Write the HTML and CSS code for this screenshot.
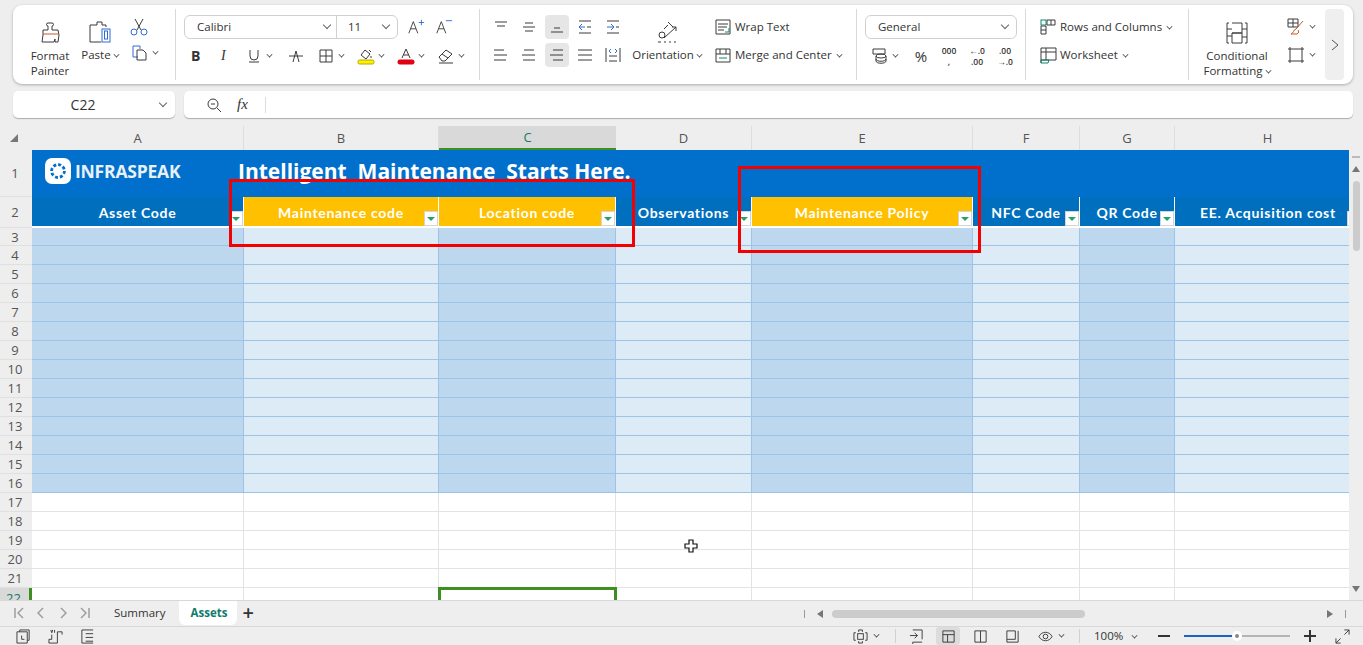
FILE: index.html
```html
<!DOCTYPE html>
<html lang="en">
<head>
<meta charset="utf-8">
<title>Assets</title>
<link rel="stylesheet" href="styles.css">
</head>
<body>
<header class="ribbon">
  <section class="grp g1">
    <div class="big fp">
      <svg class="i24" viewBox="0 0 24 24"><path d="M10 9V5a1 1 0 0 1 0-3h4a1 1 0 0 1 0 3v4h6l1 5-1 7h-3v-3l-1 3H4l1-7V9z"/><path d="M5 13h16" class="org"/></svg>
      <span>Format<br>Painter</span>
    </div>
    <div class="big ps">
      <svg class="i24" viewBox="0 0 24 24"><path d="M6 5h3V2h5v3h4v2M6 5H2v17h11"/><rect x="14" y="9" width="8" height="13" class="blu"/><rect x="16.5" y="11" width="3" height="8" class="blu"/></svg>
      <span>Paste<u class="ch"></u></span>
    </div>
    <div class="cc">
      <svg class="i20" viewBox="0 0 20 20"><path d="M6 1l6 11M14 1L8 12"/><circle cx="5" cy="14" r="3" class="blu"/><circle cx="15" cy="14" r="3" class="blu"/></svg>
      <div class="cell"><svg class="i16" viewBox="0 0 16 16"><path d="M6 12H1V1h7v3" class="blu"/><path d="M5 5h6l3 3v7H5z"/></svg><u class="ch"></u></div>
    </div>
  </section>
  <section class="grp g2">
    <div class="line">
      <div class="combo"><span class="fname">Calibri</span><u class="cv"></u><span class="fsize">11</span><u class="cv"></u></div>
      <svg class="i20 aa" viewBox="0 0 20 20"><path d="M2 17L7 4l5 13M4 12h6"/><path d="M13 5h6M16 2v6" class="blu"/></svg>
      <svg class="i20 aa" viewBox="0 0 20 20"><path d="M2 17L7 4l5 13M4 12h6"/><path d="M12 3h7" class="blu"/></svg>
    </div>
    <div class="line fmt">
      <span class="tb w28 bold">B</span>
      <span class="tb w30 ital">I</span>
      <span class="tb w42"><svg class="i16" viewBox="0 0 16 16"><path d="M4 2v6a4 4 0 0 0 8 0V2M3 14h10"/></svg><u class="ch"></u></span>
      <span class="tb w30s"><svg class="i16" viewBox="0 0 16 16"><path d="M1 8h14M5 14l3-11 3 11"/></svg></span>
      <span class="tb w40"><svg class="i16" viewBox="0 0 16 16"><path d="M2 2h12v12H2zM8 2v12M2 8h12"/></svg><u class="ch"></u></span>
      <span class="tb w40"><svg class="i16" viewBox="0 0 16 16"><path d="M3 7l4-5 5 4-4 5zM11 2l2 2M13 8v2"/><rect x="0" y="12" width="16" height="4" rx="1.5" class="yel"/></svg><u class="ch"></u></span>
      <span class="tb w40"><svg class="i16" viewBox="0 0 16 16"><path d="M4 10l4-9 4 9M5.5 7h5"/><rect x="0" y="12" width="16" height="4" rx="1.5" class="red"/></svg><u class="ch"></u></span>
      <span class="tb w40"><svg class="i16" viewBox="0 0 16 16"><path d="M1 9l7-7 6 4-7 7H4zM4 6l6 4M1 15h14"/></svg><u class="ch"></u></span>
    </div>
  </section>
  <section class="grp g3">
    <div class="aligns">
      <span class="al"><svg class="i16" viewBox="0 0 16 16"><path d="M2 3h12M4 7h8"/></svg></span>
      <span class="al"><svg class="i16" viewBox="0 0 16 16"><path d="M4 4h8M2 8h12M4 12h8"/></svg></span>
      <span class="al on"><svg class="i16" viewBox="0 0 16 16"><path d="M5 9h6M2 13h12"/></svg></span>
      <span class="al"><svg class="i16" viewBox="0 0 16 16"><path d="M2 2h12M2 14h12M10 8h4"/><path d="M8 8H2l3-3M2 8l3 3" class="blu"/></svg></span>
      <span class="al"><svg class="i16" viewBox="0 0 16 16"><path d="M2 2h12M2 14h12M11 8h3"/><path d="M2 8h7l-3-3M9 8l-3 3" class="blu"/></svg></span>
      <span class="al"><svg class="i16" viewBox="0 0 16 16"><path d="M1 3h10M1 8h13M1 13h12"/></svg></span>
      <span class="al"><svg class="i16" viewBox="0 0 16 16"><path d="M3 3h10M1 8h13M2 13h12"/></svg></span>
      <span class="al on"><svg class="i16" viewBox="0 0 16 16"><path d="M4 3h10M1 8h13M4 13h10"/></svg></span>
      <span class="al"><svg class="i16" viewBox="0 0 16 16"><path d="M1 3h14M1 8h14M1 13h14"/></svg></span>
      <span class="al"><svg class="i16" viewBox="0 0 16 16"><path d="M1 1v14M15 1v14M4 9h8M4 14h8"/><path d="M6 2L4 4l2 2M10 2l2 2-2 2" class="blu"/></svg></span>
    </div>
    <div class="big ori">
      <svg class="i24" viewBox="0 0 24 24"><circle cx="7" cy="15" r="3"/><path d="M13 2l5 5M13 5l-4 4M3 22h3M9 22h2M14 22h2M19 22h2M9 18L21 7M21 7v4M21 7h-4"/></svg>
      <span>Orientation<u class="ch"></u></span>
    </div>
    <div class="stack wm">
      <div class="cmd"><svg class="i16" viewBox="0 0 16 16"><path d="M1 1h14v14H1zM3 5h10M3 8h9M3 11h6"/><path d="M14 9v4h-4" class="grn"/></svg><span>Wrap Text</span></div>
      <div class="cmd"><svg class="i16" viewBox="0 0 16 16"><path d="M1 2h14v13H1zM1 7h14M5 2v5M11 2v5"/><path d="M4 11h8" class="grn"/></svg><span>Merge and Center<u class="ch"></u></span></div>
    </div>
  </section>
  <section class="grp g4">
    <div class="combo general"><span class="fname">General</span><u class="cv"></u></div>
    <div class="line fmt numf">
      <span class="tb w30l"><svg class="i16" viewBox="0 0 16 16"><path d="M1 1h12v5H1z"/><ellipse cx="9" cy="8" rx="5" ry="2"/><path d="M4 8v5c0 3 10 3 10 0V8M4 11c0 3 10 3 10 0"/></svg><u class="ch"></u></span>
      <span class="tb t-sym">%</span>
      <span class="tb t-mini">000<br>,</span>
      <span class="tb t-mini">←.0<br>.00</span>
      <span class="tb t-mini">.00<br>→.0</span>
    </div>
  </section>
  <section class="grp g5 stack">
    <div class="cmd"><svg class="i16" viewBox="0 0 16 16"><path d="M1 7h5v8H1zM1 11h5M7 1h8v5H7zM11 1v5"/><rect x="1" y="1" width="5" height="5" class="grn"/></svg><span>Rows and Columns<u class="ch"></u></span></div>
    <div class="cmd"><svg class="i16" viewBox="0 0 16 16"><path d="M1 1h15v12H1zM1 5h15M6 1v12M1 13v3"/><path d="M1 13h8l-1 3H1z" class="grn"/></svg><span>Worksheet<u class="ch"></u></span></div>
  </section>
  <section class="grp g6">
    <div class="big cf">
      <svg class="i24" viewBox="0 0 24 24"><path d="M4 2H2v20h2M20 2h2v20h-2M7 2h10v10H7M7 12h10v10H7zM2 8h5M2 15h5M17 8h5M17 16h5"/></svg>
      <span>Conditional<br>Formatting<u class="ch"></u></span>
    </div>
    <div class="cc cc2">
      <div class="cell"><svg class="i18" viewBox="0 0 18 18"><path d="M1 1h10v8H1zM6 1v8M1 5h10"/><path d="M16 3L9 11M9 11c-3 1-2 4-5 5h6c2-1 2-3 1-4" class="org"/></svg><u class="ch"></u></div>
      <div class="cell"><svg class="i18" viewBox="0 0 18 18"><path d="M1 3h16M1 15h16M3 1v16M15 1v16"/></svg><u class="ch"></u></div>
    </div>
    <div class="more"><svg class="i12" viewBox="0 0 12 12"><path d="M3 1l6 5-6 5"/></svg></div>
  </section>
</header>

<div class="fbar">
  <div class="namebox"><span>C22</span><u class="cv"></u></div>
  <div class="fx">
    <svg class="i16" viewBox="0 0 16 16"><circle cx="7" cy="7" r="5"/><path d="M5 7h4M11 11l4 4"/></svg>
    <em>fx</em>
    <i class="fxsep"></i>
  </div>
</div>

<main class="sheet">
  <div class="gridwrap">
    <div class="row colhead">
      <b class="corner"><svg class="i12" viewBox="0 0 12 12"><path class="fill" d="M10 2v8H2z"/></svg></b>
      <b>A</b><b>B</b><b class="act">C</b><b>D</b><b>E</b><b>F</b><b>G</b><b>H</b>
    </div>
    <div class="row1">
      <b class="rh">1</b>
      <div class="banner">
        <div class="logo">
          <svg class="logomark" viewBox="0 0 26 26"><rect width="26" height="26" rx="7" class="lw"/><circle cx="13" cy="13" r="6.5" class="lbs"/><circle cx="13" cy="13" r="8.5" class="lbd"/></svg>
          <span>INFRASPEAK</span>
        </div>
        <div class="title">Intelligent  Maintenance  Starts Here.</div>
      </div>
    </div>
    <div class="row row2">
      <b class="rh">2</b>
      <div class="hd">Asset Code<i class="flt"></i></div>
      <div class="hd gold">Maintenance code<i class="flt"></i></div>
      <div class="hd gold">Location code<i class="flt"></i></div>
      <div class="hd">Observations<i class="flt"></i></div>
      <div class="hd gold">Maintenance Policy<i class="flt"></i></div>
      <div class="hd">NFC Code<i class="flt"></i></div>
      <div class="hd">QR Code<i class="flt"></i></div>
      <div class="hd">EE. Acquisition cost<i class="flt"></i></div>
    </div>
    <div class="row tb1"><b class="rh">3</b><i class="dk"></i><i class="lt"></i><i class="dk"></i><i class="lt"></i><i class="dk"></i><i class="lt"></i><i class="dk"></i><i class="lt"></i></div>
    <div class="row"><b class="rh">4</b><i class="dk"></i><i class="lt"></i><i class="dk"></i><i class="lt"></i><i class="dk"></i><i class="lt"></i><i class="dk"></i><i class="lt"></i></div>
    <div class="row"><b class="rh">5</b><i class="dk"></i><i class="lt"></i><i class="dk"></i><i class="lt"></i><i class="dk"></i><i class="lt"></i><i class="dk"></i><i class="lt"></i></div>
    <div class="row"><b class="rh">6</b><i class="dk"></i><i class="lt"></i><i class="dk"></i><i class="lt"></i><i class="dk"></i><i class="lt"></i><i class="dk"></i><i class="lt"></i></div>
    <div class="row"><b class="rh">7</b><i class="dk"></i><i class="lt"></i><i class="dk"></i><i class="lt"></i><i class="dk"></i><i class="lt"></i><i class="dk"></i><i class="lt"></i></div>
    <div class="row"><b class="rh">8</b><i class="dk"></i><i class="lt"></i><i class="dk"></i><i class="lt"></i><i class="dk"></i><i class="lt"></i><i class="dk"></i><i class="lt"></i></div>
    <div class="row"><b class="rh">9</b><i class="dk"></i><i class="lt"></i><i class="dk"></i><i class="lt"></i><i class="dk"></i><i class="lt"></i><i class="dk"></i><i class="lt"></i></div>
    <div class="row"><b class="rh">10</b><i class="dk"></i><i class="lt"></i><i class="dk"></i><i class="lt"></i><i class="dk"></i><i class="lt"></i><i class="dk"></i><i class="lt"></i></div>
    <div class="row"><b class="rh">11</b><i class="dk"></i><i class="lt"></i><i class="dk"></i><i class="lt"></i><i class="dk"></i><i class="lt"></i><i class="dk"></i><i class="lt"></i></div>
    <div class="row"><b class="rh">12</b><i class="dk"></i><i class="lt"></i><i class="dk"></i><i class="lt"></i><i class="dk"></i><i class="lt"></i><i class="dk"></i><i class="lt"></i></div>
    <div class="row"><b class="rh">13</b><i class="dk"></i><i class="lt"></i><i class="dk"></i><i class="lt"></i><i class="dk"></i><i class="lt"></i><i class="dk"></i><i class="lt"></i></div>
    <div class="row"><b class="rh">14</b><i class="dk"></i><i class="lt"></i><i class="dk"></i><i class="lt"></i><i class="dk"></i><i class="lt"></i><i class="dk"></i><i class="lt"></i></div>
    <div class="row"><b class="rh">15</b><i class="dk"></i><i class="lt"></i><i class="dk"></i><i class="lt"></i><i class="dk"></i><i class="lt"></i><i class="dk"></i><i class="lt"></i></div>
    <div class="row"><b class="rh">16</b><i class="dk"></i><i class="lt"></i><i class="dk"></i><i class="lt"></i><i class="dk"></i><i class="lt"></i><i class="dk"></i><i class="lt"></i></div>
    <div class="row"><b class="rh">17</b><i></i><i></i><i></i><i></i><i></i><i></i><i></i><i></i></div>
    <div class="row"><b class="rh">18</b><i></i><i></i><i></i><i></i><i></i><i></i><i></i><i></i></div>
    <div class="row"><b class="rh">19</b><i></i><i></i><i></i><i></i><i></i><i></i><i></i><i></i></div>
    <div class="row"><b class="rh">20</b><i></i><i></i><i></i><i></i><i></i><i></i><i></i><i></i></div>
    <div class="row"><b class="rh">21</b><i></i><i></i><i></i><i></i><i></i><i></i><i></i><i></i></div>
    <div class="row"><b class="rh act">22</b><i></i><i></i><i class="sel"></i><i></i><i></i><i></i><i></i><i></i></div>
  </div>
  <aside class="vbar">
    <i class="vdash"></i>
    <svg class="i8" viewBox="0 0 8 8"><path class="fill" d="M4 1l4 6H0z"/></svg>
    <i class="vthumb"></i>
    <svg class="i8 vdown" viewBox="0 0 8 8"><path class="fill" d="M4 7l4-6H0z"/></svg>
  </aside>
  <div class="redbox rb1"></div>
  <div class="redbox rb2"></div>
  <svg class="cursor" viewBox="0 0 14 14"><path d="M5 1h4v4h4v4H9v4H5V9H1V5h4z"/></svg>
</main>

<div class="tabbar">
  <div class="nav">
    <svg class="i12" viewBox="0 0 12 12"><path d="M2 1v10M10 1L5 6l5 5"/></svg>
    <svg class="i12" viewBox="0 0 12 12"><path d="M8 1L3 6l5 5"/></svg>
    <svg class="i12" viewBox="0 0 12 12"><path d="M4 1l5 5-5 5"/></svg>
    <svg class="i12" viewBox="0 0 12 12"><path d="M10 1v10M2 1l5 5-5 5"/></svg>
  </div>
  <span class="tab">Summary</span>
  <span class="tab cur">Assets</span>
  <span class="plus">+</span>
  <div class="hs">
    <i class="tick"></i>
    <svg class="i8" viewBox="0 0 8 8"><path class="fill" d="M1 4l6-4v8z"/></svg>
    <i class="hthumb"></i>
    <svg class="i8" viewBox="0 0 8 8"><path class="fill" d="M7 4L1 0v8z"/></svg>
    <i class="tick"></i>
  </div>
</div>

<footer class="status">
  <div class="sl">
    <svg class="i16" viewBox="0 0 16 16"><path d="M4 3V1h10v11h-2M1 3h11v12H1zM6 7v4h3"/></svg>
    <svg class="i16" viewBox="0 0 16 16"><path d="M4 6v5H1v4h9V3h5v3M3 1l1 3 1-3M7 1v3"/></svg>
    <svg class="i16" viewBox="0 0 16 16"><path d="M14 1H2v14h12M6 5h8M6 9h8M6 13h8"/></svg>
  </div>
  <div class="sr">
    <span class="st s1"><svg class="i16" viewBox="0 0 16 16"><rect x="5" y="5" width="6" height="6"/><path d="M3 4H1v8h2M13 4h2v8h-2M6 3V1h4v2M6 13v2h4v-2"/></svg><u class="ch"></u></span>
    <i class="ssep sa"></i>
    <span class="st s2"><svg class="i16" viewBox="0 0 16 16"><path d="M4 1h10v10M1 7h8l-3-3M9 7l-3 3M14 14H4v2"/></svg></span>
    <span class="st s3 on"><svg class="i16" viewBox="0 0 16 16"><path d="M2 2h12v12H2zM2 6h12M7 6v8"/></svg></span>
    <span class="st s3"><svg class="i16" viewBox="0 0 16 16"><path d="M2 2h12v12H2zM8 2v12"/></svg></span>
    <span class="st s3"><svg class="i16" viewBox="0 0 16 16"><path d="M2 14h12V2M2 2v12M2 2h9v9H2"/></svg></span>
    <span class="st s4"><svg class="i16" viewBox="0 0 16 16"><path d="M1 8c3-6 11-6 14 0-3 6-11 6-14 0z"/><circle cx="8" cy="8" r="2.5"/></svg><u class="ch"></u></span>
    <i class="ssep sb"></i>
    <span class="zoomv">100%<u class="ch"></u></span>
    <span class="zbtn minus"></span>
    <span class="slider"><i class="sfill"></i><i class="sknob"></i></span>
    <span class="zbtn plusb"></span>
    <svg class="i16 fs" viewBox="0 0 16 16"><path d="M10 1h5v5M15 1l-5 5M6 15H1v-5M1 15l5-5"/></svg>
  </div>
</footer>
</body>
</html>
```

FILE: styles.css
```css
* { box-sizing: border-box; }
html, body { margin: 0; padding: 0; }
body {
  width: 1363px; height: 645px; overflow: hidden; position: relative;
  background: #eeeeee; color: #333;
  font: 11.5px/16px "Open Sans", "Noto Sans", sans-serif;
}
svg { display: block; flex: none; fill: none; stroke: #3a3a3a; stroke-width: 1; overflow: visible; }
.i24 { width: 24px; height: 24px; }
.i20 { width: 20px; height: 20px; }
.i18 { width: 18px; height: 18px; }
.i16 { width: 16px; height: 16px; }
.i12 { width: 12px; height: 12px; }
.i8 { width: 8px; height: 8px; }
.blu { stroke: #2e6bd6; fill: none; }
.org { stroke: #c8592a; }
.grn { stroke: #14866b; }
.yel { stroke: #b5a800; fill: #ffef00; }
.red { stroke: #e00010; fill: #e00010; }
.fill { fill: #777; stroke: none; }

/* little chevrons */
.ch {
  display: inline-block; width: 5px; height: 5px; margin-left: 5px; flex: none;
  border: solid #444; border-width: 0 1.3px 1.3px 0;
  transform: translateY(-2px) rotate(45deg) scale(.85);
}
.cv {
  display: block; width: 6px; height: 6px; flex: none;
  border: solid #666; border-width: 0 1px 1px 0;
  transform: translateY(-2px) rotate(45deg);
}

/* ribbon */
.ribbon {
  display: flex; width: 1340px; height: 79px; margin: 5px 0 0 13px;
  background: #fff; border-radius: 9px; box-shadow: 0 1px 3px rgba(0,0,0,.28);
  padding: 4px 0;
}
.grp { height: 71px; border-right: 1px solid #d9d9d9; flex: none; display: flex; position: relative; }
.g1 { width: 163px; padding-top: 6px; }
.g2 { width: 304px; padding: 6px 0 0 8px; flex-direction: column; }
.g3 { width: 377px; padding-top: 6px; }
.g4 { width: 169px; padding: 6px 0 0 8px; flex-direction: column; }
.g5 { width: 163px; padding: 6px 0 0 14px; }
.g6 { flex: 1; border-right: 0; padding-top: 6px; }

.big { display: flex; flex-direction: column; align-items: center; text-align: center; flex: none; line-height: 15px; }
.big span { white-space: nowrap; }
.big .ch { margin-left: 3px; }
.fp { width: 54px; margin-left: 10px; }
.fp svg { margin: 6px 0 3px; }
.ps { width: 46px; }
.ps svg { margin: 5px 0 3px; }
.cc { display: flex; flex-direction: column; align-items: flex-start; margin-left: 4px; }
.cc > svg { margin: 3px 0 0 2px; }
.cc .cell { display: flex; align-items: center; margin-top: 7px; margin-left: 5px; }
.cell .ch { margin-left: 5px; }

.line { display: flex; align-items: center; }
.combo {
  display: flex; align-items: center; height: 24px; width: 214px;
  border: 1px solid #d0d0d0; border-radius: 6px; flex: none;
}
.fname { flex: 1; padding-left: 12px; }
.combo > .cv:nth-child(2) { margin-right: 6px; }
.fsize { width: 47px; height: 22px; line-height: 22px; border-left: 1px solid #d0d0d0; padding-left: 11px; }
.combo > .cv:last-child { margin-right: 8px; }
.aa { margin-left: 9px; width: 18px; height: 18px; }
.aa + .aa { margin-left: 10px; }
.fmt { margin-top: 5px; height: 24px; }
.tb { display: flex; align-items: center; justify-content: flex-start; flex: none; height: 24px; }
.w28 { width: 28px; padding-left: 7px; }
.w30 { width: 30px; padding-left: 9px; }
.w30s { width: 30px; padding-left: 4px; }
.w42 { width: 42px; padding-left: 4px; }
.w40 { width: 40px; padding-left: 4px; }
.bold { font-weight: 700; font-size: 14px; }
.ital { font: italic 14px "Liberation Serif", serif; }

.aligns { display: grid; grid-template-columns: repeat(5, 28px); grid-auto-rows: 24px; row-gap: 4px; margin-left: 9px; flex: none; }
.al { width: 24px; height: 24px; display: flex; align-items: center; justify-content: center; border-radius: 4px; }
.al.on { background: #e6e6e6; }
.ori { width: 76px; margin-left: 0; }
.ori svg { margin: 5px 0 3px; }
.stack { display: flex; flex-direction: column; }
.wm { margin-left: 10px; row-gap: 12px; }
.cmd { display: flex; align-items: center; column-gap: 4px; height: 16px; white-space: nowrap; margin-top: 4px; }
.wm .cmd + .cmd { margin-top: 0; }
.g5 .cmd + .cmd { margin-top: 12px; }

.general { width: 152px; }
.general .cv { margin-right: 8px; }
.numf { margin-top: 5px; }
.w30l { width: 42px; padding-left: 7px; }
.t-sym { width: 28px; justify-content: center; font-size: 15px; }
.t-mini { width: 28px; display: block; font-size: 8.5px; line-height: 11px; text-align: center; font-weight: 600; padding-top: 1px; }

.cf { width: 92px; margin-left: 2px; }
.cf svg { margin: 6px 0 3px; }
.cc2 { margin-left: -1px; }
.cc2 .cell { margin: 3px 0 0 5px; }
.cc2 .cell + .cell { margin-top: 10px; }
.more {
  width: 19px; height: 71px; margin: -6px 0 0 10px; background: #efefef; border-radius: 4px;
  display: flex; align-items: center; justify-content: center;
}
.more svg { stroke: #555; }

/* formula bar */
.fbar { display: flex; column-gap: 9px; margin: 7px 0 0 13px; height: 27px; }
.namebox, .fx { background: #fff; border-radius: 5px; box-shadow: 0 1px 1px rgba(0,0,0,.28); display: flex; align-items: center; }
.namebox { width: 162px; font-size: 14px; }
.namebox span { flex: 1; text-align: center; padding-right: 7px; }
.namebox .cv { margin-right: 9px; }
.fx { width: 1169px; padding-left: 22px; }
.fx em { font: italic 15px "Liberation Serif", serif; margin-left: 15px; width: 18px; }
.fxsep { width: 1px; height: 16px; background: #ddd; margin-left: 10px; }

/* sheet */
.sheet { position: static; display: flex; margin-top: 8px; height: 474px; overflow: hidden; }
.gridwrap { width: 1349px; flex: none; background: #fff; overflow: hidden; }
.row { display: grid; grid-template-columns: 32px 212px 195px 177px 136px 221px 107px 95px 186px; height: 19px; background: #fff; width: 1361px; }
.row > i { display: block; border: solid #e3e3e3; border-width: 0 1px 1px 0; }
.row > i.dk { background: #bdd7ee; border-color: #9dc3e6; }
.row > i.lt { background: #ddebf7; border-color: #9dc3e6; }
.row > i.sel { border: 0; border-top: 3px solid #3e8e22; border-left: 3px solid #3e8e22; border-right: 3px solid #3e8e22; margin: -1px -1px 0 -1px; position: relative; }
.rh {
  display: flex; align-items: center; justify-content: center; background: #eee; color: #555;
  font-weight: 400; font-size: 13px; border-bottom: 1px solid #e0e0e0; padding-right: 2px;
}
.rh.act { background: #d9d9d9; color: #14796b; border-right: 3px solid #3e8e22; border-bottom: 0; }
.colhead { height: 24px; background: #eee; }
.colhead b {
  display: flex; align-items: center; justify-content: center; font-weight: 400; font-size: 13px; color: #555;
  border-right: 1px solid #ddd; background: #eee;
}
.colhead b.act { background: #d9d9d9; color: #14796b; border-bottom: 2px solid #3e8e22; border-right: 0; }
.colhead .corner { border: 0; padding: 0 4px 0 0; }
.row1 { display: grid; grid-template-columns: 32px 1317px; height: 47px; }
.banner { background: #0070cc; display: flex; align-items: flex-start; padding: 8px 0 0 13px; position: relative; }
.logo { display: flex; align-items: center; column-gap: 4px; width: 194px; flex: none; color: #e9f1f8; font: 700 17.5px/26px "Open Sans", sans-serif; letter-spacing: -.2px; }
.logomark { width: 26px; height: 26px; stroke: none; }
.lw { fill: #fff; stroke: none; }
.lbs { fill: #fff; stroke: #0070cc; stroke-width: 3; stroke-dasharray: 3 2; }
.lbd { fill: none; stroke: #fff; stroke-width: 1; }
.title { color: #fff; font: 700 21px/26px "Open Sans", sans-serif; white-space: pre; margin-left: -1px; }
.row2 { height: 31px; background: #fff; }
.hd {
  position: relative; background: #006fbe; color: #fff; height: 29px; border-right: 1px solid #fff; padding-top: 3px;
  display: flex; align-items: center; justify-content: center;
  font: 700 14px/26px Lato, sans-serif; letter-spacing: .7px; white-space: nowrap; overflow: hidden;
}
.hd:last-child { border-right: 0; }
.hd.gold { background: #ffc000; }
.flt {
  position: absolute; right: 0; bottom: 0; width: 14px; height: 15px; background: #fff; border: 1px solid #d4d4d4;
}
.flt::after {
  content: ""; position: absolute; left: 2px; top: 5px;
  border: 4px solid transparent; border-top: 4px solid #26a269; border-bottom: 0;
}
.tb1 { height: 18px; }

/* overlays */
.redbox { position: absolute; border: 3px solid #f50000; pointer-events: none; }
.rb1 { left: 229px; top: 179px; width: 406px; height: 68px; }
.rb2 { left: 738px; top: 166px; width: 243px; height: 87px; }
.cursor { position: absolute; left: 684px; top: 539px; width: 14px; height: 14px; }
.cursor path { fill: #fff; stroke: #111; stroke-width: 1.2; }

/* vertical scrollbar */
.vbar { width: 14px; flex: none; display: flex; flex-direction: column; align-items: center; background: #eee; position: relative; }
.vdash { width: 8px; height: 2px; background: #bbb; margin-top: 30px; }
.vbar .i8 { margin-top: 7px; }
.vthumb { width: 7px; height: 70px; background: #ccc; border-radius: 4px; margin-top: 8px; }
.vbar .vdown { margin-top: auto; margin-bottom: 7px; }

/* tabs */
.tabbar { display: flex; align-items: flex-start; height: 27px; border-top: 1px solid #d8d8d8; border-bottom: 1px solid #d8d8d8; position: relative; background: #eee; }
.nav { display: flex; column-gap: 10px; padding: 6px 0 0 13px; width: 102px; flex: none; }
.nav svg { stroke: #999; stroke-width: 1.4; }
.tab { padding: 0 12px; height: 25px; line-height: 24px; flex: none; }
.tab.cur { background: #fff; color: #0f7b6c; font-weight: 700; border-radius: 0 0 6px 6px; margin-left: 1px; height: 24px; padding-right: 10px; }
.plus { font-size: 20px; line-height: 24px; margin-left: 5px; color: #333; font-weight: 600; }
.hs { display: flex; align-items: center; height: 25px; margin-left: auto; margin-right: 17px; flex: none; }
.tick { width: 1px; height: 8px; background: #999; }
.hs .i8 { margin-left: 11px; }
.hthumb { width: 253px; height: 8px; background: #ccc; border-radius: 4px; margin: 0 241px 0 8px; }
.hs .i8:nth-of-type(2) { margin-left: 0; margin-right: 11px; }

/* status */
.status { display: flex; align-items: center; justify-content: space-between; height: 18px; }
.sl { display: flex; column-gap: 17px; padding-left: 16px; }
.sl svg, .sr svg { width: 15px; height: 15px; }
.sr { display: flex; align-items: center; height: 18px; padding-right: 13px; }
.st { display: flex; align-items: center; justify-content: center; height: 18px; flex: none; }
.s1 { width: 28px; }
.s1 .ch, .s4 .ch { margin-left: 6px; }
.ssep { width: 1px; height: 14px; background: #d0d0d0; }
.sa { margin: 0 9px 0 15px; }
.sb { margin: 0 6px 0 14px; }
.s2 { width: 22px; margin-right: 9px; }
.s3 { width: 24px; margin-right: 8px; }
.s3.on { background: #dcdcdc; border-radius: 3px; }
.s4 { width: 28px; margin-left: 5px; }
.zoomv { width: 72px; padding-left: 8px; white-space: nowrap; }
.zoomv .ch { margin-left: 9px; }
.zbtn { width: 12px; height: 2px; background: #333; position: relative; flex: none; }
.minus { margin-right: 14px; }
.plusb::after { content: ""; position: absolute; left: 5px; top: -5px; width: 2px; height: 12px; background: #333; }
.slider { position: relative; width: 106px; height: 2px; background: #b5b5b5; margin-right: 14px; flex: none; }
.sfill { position: absolute; left: 0; top: 0; width: 50px; height: 2px; background: #1f62c4; }
.sknob { position: absolute; left: 48px; top: -4px; width: 10px; height: 10px; border-radius: 50%; background: #888; border: 3px solid #fff; }
.fs { margin-left: 19px; }
```
